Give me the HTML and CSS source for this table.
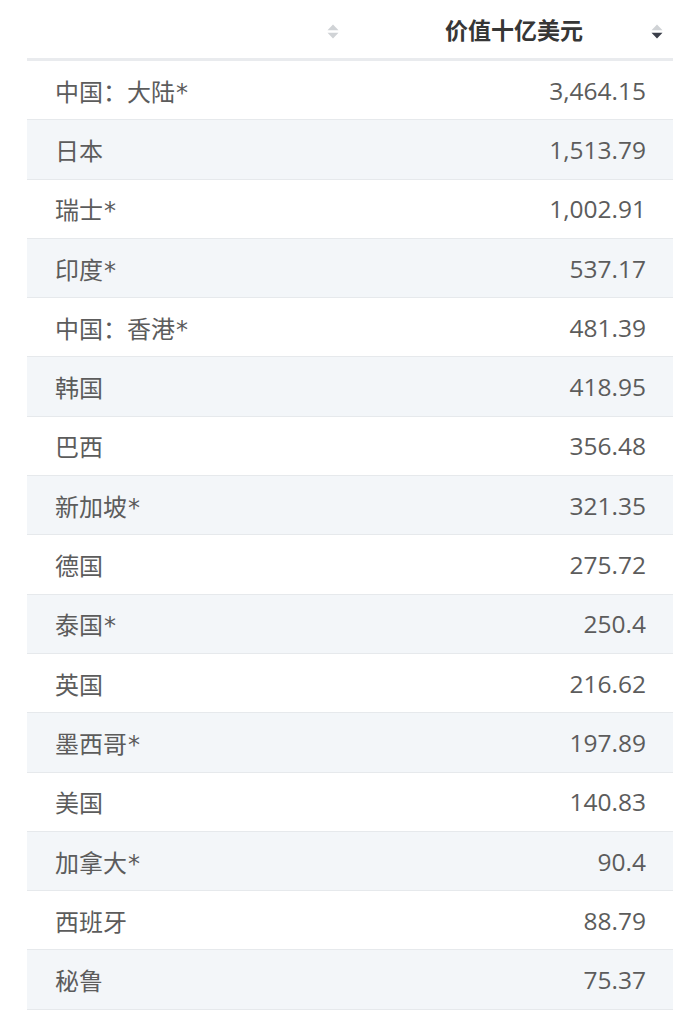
FILE: index.html
```html
<!DOCTYPE html>
<html lang="zh">
<head>
<meta charset="utf-8">
<link rel="stylesheet" href="styles.css">
</head>
<body>
<div class="table">
  <div class="head">
    <div class="hcell hname">
      <svg class="sort" viewBox="0 0 12 16" width="12" height="16"><path d="M6 1 L11.5 6.8 H0.5 Z" fill="#d0d3d6"/><path d="M6 15 L11.5 9.2 H0.5 Z" fill="#d0d3d6"/></svg>
    </div>
    <div class="hcell hval">
      <span class="htext">价值十亿美元</span>
      <svg class="sort" viewBox="0 0 12 16" width="12" height="16"><path d="M6 1 L11.5 6.8 H0.5 Z" fill="#d0d3d6"/><path d="M6 15 L11.5 9.2 H0.5 Z" fill="#3b3f4a"/></svg>
    </div>
  </div>
  <div class="row"><span class="name">中国：大陆<span class="star">*</span></span><span class="val">3,464.15</span></div>
  <div class="row"><span class="name">日本</span><span class="val">1,513.79</span></div>
  <div class="row"><span class="name">瑞士<span class="star">*</span></span><span class="val">1,002.91</span></div>
  <div class="row"><span class="name">印度<span class="star">*</span></span><span class="val">537.17</span></div>
  <div class="row"><span class="name">中国：香港<span class="star">*</span></span><span class="val">481.39</span></div>
  <div class="row"><span class="name">韩国</span><span class="val">418.95</span></div>
  <div class="row"><span class="name">巴西</span><span class="val">356.48</span></div>
  <div class="row"><span class="name">新加坡<span class="star">*</span></span><span class="val">321.35</span></div>
  <div class="row"><span class="name">德国</span><span class="val">275.72</span></div>
  <div class="row"><span class="name">泰国<span class="star">*</span></span><span class="val">250.4</span></div>
  <div class="row"><span class="name">英国</span><span class="val">216.62</span></div>
  <div class="row"><span class="name">墨西哥<span class="star">*</span></span><span class="val">197.89</span></div>
  <div class="row"><span class="name">美国</span><span class="val">140.83</span></div>
  <div class="row"><span class="name">加拿大<span class="star">*</span></span><span class="val">90.4</span></div>
  <div class="row"><span class="name">西班牙</span><span class="val">88.79</span></div>
  <div class="row"><span class="name">秘鲁</span><span class="val">75.37</span></div>
</div>
</body>
</html>
```
FILE: styles.css
```css
html, body {
  margin: 0;
  padding: 0;
  background: #ffffff;
}
body {
  font-family: "Noto Sans", "Noto Sans CJK SC", sans-serif;
  color: #5a5a5a;
}
.table {
  width: 646px;
  margin-left: 27px;
}
.head {
  display: flex;
  height: 58px;
  border-bottom: 3px solid #e9ebee;
}
.hcell {
  display: flex;
  align-items: center;
}
.hname {
  width: 312px;
  justify-content: flex-end;
}
.hval {
  flex: 1;
  justify-content: flex-end;
  gap: 68px;
  padding-right: 10px;
}
.htext {
  font-size: 23px;
  font-weight: bold;
  color: #363636;
  font-family: "Noto Sans CJK SC", sans-serif;
}
.sort {
  display: block;
  width: 12px;
  height: 17px;
  margin-top: 4px;
}
.row {
  display: flex;
  justify-content: space-between;
  align-items: center;
  height: 58.3px;
  border-bottom: 1px solid #e6e9ec;
  padding: 0 27px 0 28px;
}
.row:nth-child(odd) {
  background: #f3f6f9;
}
.name {
  font-family: "Noto Sans CJK SC", sans-serif;
  font-size: 24px;
  font-weight: 400;
  color: #5c5c5c;
}
.star {
  font-family: "DejaVu Sans", sans-serif;
  font-size: 24px;
  margin-left: 1px;
}
.val {
  font-family: "Open Sans", "Noto Sans", sans-serif;
  font-size: 24.5px;
  font-weight: 400;
  color: #5c5c5c;
}
```
